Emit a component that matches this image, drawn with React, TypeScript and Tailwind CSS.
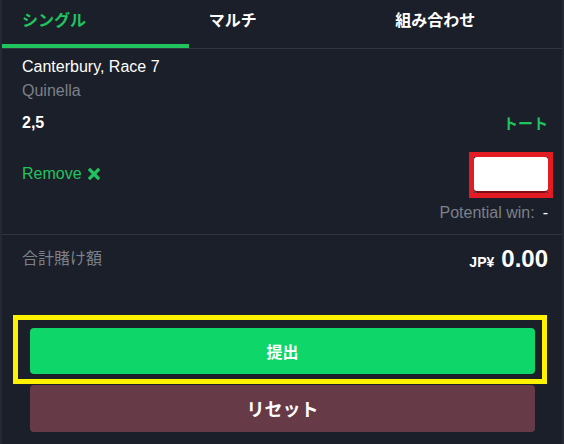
import React from 'react';

const tabs = ['シングル', 'マルチ', '組み合わせ'];

const RemoveIcon: React.FC = () => (
	<svg width="12" height="12" viewBox="0 0 12 12" className="inline-block">
		<path d="M2 2 L10 10 M10 2 L2 10" stroke="currentColor" strokeWidth="3.2" strokeLinecap="square" />
	</svg>
);

const App: React.FC = () => {
	return (
		<div className="w-[564px] h-[444px] overflow-hidden bg-[#1b1f29] border-x-2 border-[#242934] font-['Liberation_Sans','Noto_Sans_CJK_JP',sans-serif] text-white">
			{/* tabs */}
			<div className="flex border-b border-[#2f3541]">
				{tabs.map((t, i) => (
					<div
						key={t}
						className={
							i === 0
								? 'w-[187px] h-[48px] pl-[20px] pt-[9px] border-b-4 border-[#1fc45f] text-[#1fc45f] text-[16px] leading-5 font-bold font-["Noto_Sans_CJK_JP",sans-serif]'
								: 'w-[187px] h-[48px] pl-[20px] pt-[9px] border-b-4 border-transparent text-white text-[16px] leading-5 font-bold font-["Noto_Sans_CJK_JP",sans-serif]'
						}
					>
						{t}
					</div>
				))}
			</div>

			{/* bet slip item */}
			<div className="pl-[20px] pr-[14px] pt-[8px]">
				<div className="text-[16px] leading-5">Canterbury, Race 7</div>
				<div className="mt-[4px] text-[16px] leading-5 text-[#7b8089]">Quinella</div>
				<div className="mt-[12px] flex items-center justify-between">
					<span className="text-[16px] leading-5 font-bold">2,5</span>
					<span className="text-[15px] leading-5 font-bold text-[#1fc45f] font-['Noto_Sans_CJK_JP',sans-serif]">トート</span>
				</div>
				<div className="mt-[19px] flex items-center justify-between">
					<div className="flex items-center gap-[6px] -mt-[2px] text-[16px] leading-5 text-[#1fc45f]">
						Remove
						<RemoveIcon />
					</div>
					<div className="-mr-[5px] border-[5px] border-[#e31b23]">
						<div className="w-[74px] h-[36px] rounded-[3px] bg-white shadow-[inset_0_-2px_0_#7c1016]" />
					</div>
				</div>
				<div className="mt-[5px] flex justify-end items-center gap-[8px] text-[16px] leading-5">
					<span className="text-[#7b8089]">Potential win:</span>
					<span className="text-white">-</span>
				</div>
			</div>

			<div className="mt-[11px] border-t border-[#2f3541]" />

			{/* total */}
			<div className="h-[80px] pl-[20px] pr-[14px] pt-[12px] flex justify-between items-start">
				<span className="text-[16px] leading-5 text-[#7b8089] font-['Noto_Sans_CJK_JP',sans-serif]">合計賭け額</span>
				<div className="flex items-baseline gap-[7px] leading-6">
					<span className="text-[14px] font-bold">JP¥</span>
					<span className="text-[24px] font-bold">0.00</span>
				</div>
			</div>

			{/* actions */}
			<div className="ml-[11px] mr-[15px] border-[5px] border-[#fff200] pl-[12px] pr-[7px] pt-[8px] pb-[5px]">
				<button
					type="button"
					className="w-full h-[46px] rounded-[4px] bg-[#0fd668] text-white text-[16px] font-bold font-['Noto_Sans_CJK_JP',sans-serif]"
				>
					提出
				</button>
			</div>
			<div className="mt-[1px] pl-[28px] pr-[27px]">
				<button
					type="button"
					className="w-full h-[47px] rounded-[4px] bg-[#673a48] text-white text-[18px] font-bold font-['Noto_Sans_CJK_JP',sans-serif]"
				>
					リセット
				</button>
			</div>
		</div>
	);
};

export default App;
